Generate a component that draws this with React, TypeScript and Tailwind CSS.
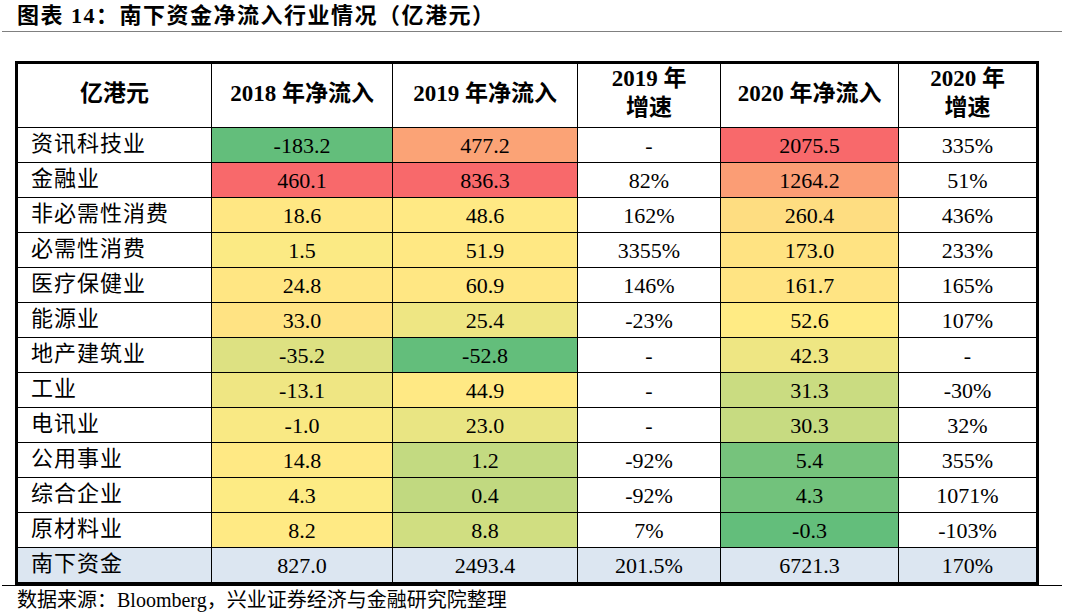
import React from "react";

type Row = {
  name: string;
  y2018: number;
  y2019: number;
  g2019: string;
  y2020: number;
  g2020: string;
};

const rows: Row[] = [
  { name: "资讯科技业", y2018: -183.2, y2019: 477.2, g2019: "-", y2020: 2075.5, g2020: "335%" },
  { name: "金融业", y2018: 460.1, y2019: 836.3, g2019: "82%", y2020: 1264.2, g2020: "51%" },
  { name: "非必需性消费", y2018: 18.6, y2019: 48.6, g2019: "162%", y2020: 260.4, g2020: "436%" },
  { name: "必需性消费", y2018: 1.5, y2019: 51.9, g2019: "3355%", y2020: 173.0, g2020: "233%" },
  { name: "医疗保健业", y2018: 24.8, y2019: 60.9, g2019: "146%", y2020: 161.7, g2020: "165%" },
  { name: "能源业", y2018: 33.0, y2019: 25.4, g2019: "-23%", y2020: 52.6, g2020: "107%" },
  { name: "地产建筑业", y2018: -35.2, y2019: -52.8, g2019: "-", y2020: 42.3, g2020: "-" },
  { name: "工业", y2018: -13.1, y2019: 44.9, g2019: "-", y2020: 31.3, g2020: "-30%" },
  { name: "电讯业", y2018: -1.0, y2019: 23.0, g2019: "-", y2020: 30.3, g2020: "32%" },
  { name: "公用事业", y2018: 14.8, y2019: 1.2, g2019: "-92%", y2020: 5.4, g2020: "355%" },
  { name: "综合企业", y2018: 4.3, y2019: 0.4, g2019: "-92%", y2020: 4.3, g2020: "1071%" },
  { name: "原材料业", y2018: 8.2, y2019: 8.8, g2019: "7%", y2020: -0.3, g2020: "-103%" },
];

// Excel-style 3-colour scale: lowest green, median yellow, highest red
const GREEN = [99, 190, 123];
const YELLOW = [255, 235, 132];
const RED = [248, 105, 107];

function scaleColor(v: number, all: number[]) {
  const s = [...all].sort((a, b) => a - b);
  const min = s[0];
  const max = s[s.length - 1];
  const mid = (s[5] + s[6]) / 2;
  let from = GREEN;
  let to = YELLOW;
  let t = 0;
  if (v <= mid) {
    t = (v - min) / (mid - min);
  } else {
    from = YELLOW;
    to = RED;
    t = (v - mid) / (max - mid);
  }
  const c = from.map((f, i) => Math.round(f + (to[i] - f) * t));
  return `rgb(${c[0]}, ${c[1]}, ${c[2]})`;
}

const col2018 = rows.map((r) => r.y2018);
const col2019 = rows.map((r) => r.y2019);
const col2020 = rows.map((r) => r.y2020);

const font = { fontFamily: "'Liberation Serif', 'Noto Sans CJK SC', serif" };

export default function App() {
  return (
    <div
      className="w-[1080px] h-[615px] bg-white text-black overflow-hidden"
      style={font}
    >
      <div className="ml-[2px] w-[1060px] h-[32px] border-b border-[#808080] pl-[15px] text-[22px] font-bold leading-[31px] tracking-[1.5px]">
        图表 14：南下资金净流入行业情况（亿港元）
      </div>

      <div className="ml-[2px] w-[1060px] border-b border-black pt-[29px]">
        <table className="ml-[13px] w-[1021px] table-fixed border-collapse border-[3px] border-black text-[22px]">
          <colgroup>
            <col className="w-[195px]" />
            <col className="w-[181px]" />
            <col className="w-[185px]" />
            <col className="w-[143px]" />
            <col className="w-[178px]" />
            <col className="w-[139px]" />
          </colgroup>
          <thead>
            <tr className="h-[62px] font-bold leading-[29px] text-[23px]">
              <th className="border border-black pb-[5px]">亿港元</th>
              <th className="border border-black pb-[5px]">2018 年净流入</th>
              <th className="border border-black pb-[5px]">2019 年净流入</th>
              <th className="border border-black pb-[5px]">
                2019 年<br />增速
              </th>
              <th className="border border-black pb-[5px]">2020 年净流入</th>
              <th className="border border-black pb-[5px]">
                2020 年<br />增速
              </th>
            </tr>
          </thead>
          <tbody>
            {rows.map((r) => (
              <tr key={r.name} className="h-[35px] leading-[26px]">
                <td className="border border-black pl-[13px] pb-[3px] tracking-[1px]">{r.name}</td>
                <td
                  className="border border-black text-center pt-[2px]"
                  style={{ backgroundColor: scaleColor(r.y2018, col2018) }}
                >
                  {r.y2018.toFixed(1)}
                </td>
                <td
                  className="border border-black text-center pt-[2px]"
                  style={{ backgroundColor: scaleColor(r.y2019, col2019) }}
                >
                  {r.y2019.toFixed(1)}
                </td>
                <td className="border border-black text-center pt-[2px]">{r.g2019}</td>
                <td
                  className="border border-black text-center pt-[2px]"
                  style={{ backgroundColor: scaleColor(r.y2020, col2020) }}
                >
                  {r.y2020.toFixed(1)}
                </td>
                <td className="border border-black text-center pt-[2px]">{r.g2020}</td>
              </tr>
            ))}
            <tr className="h-[36px] leading-[26px] bg-[#dce6f1]">
              <td className="border border-black pl-[13px] pb-[3px] tracking-[1px]">南下资金</td>
              <td className="border border-black text-center pt-[2px]">827.0</td>
              <td className="border border-black text-center pt-[2px]">2493.4</td>
              <td className="border border-black text-center pt-[2px]">201.5%</td>
              <td className="border border-black text-center pt-[2px]">6721.3</td>
              <td className="border border-black text-center pt-[2px]">170%</td>
            </tr>
          </tbody>
        </table>
      </div>

      <p className="pl-[17px] pt-[1px] text-[20px] leading-[26px]">
        数据来源：Bloomberg，兴业证券经济与金融研究院整理
      </p>
    </div>
  );
}
